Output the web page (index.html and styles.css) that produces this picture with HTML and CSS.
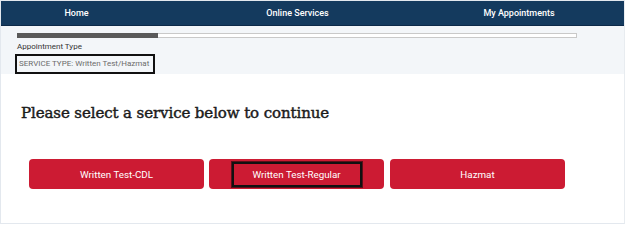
FILE: index.html
```html
<!DOCTYPE html>
<html>
<head>
<meta charset="utf-8">
<link rel="stylesheet" href="styles.css">
</head>
<body>
<div class="page">
  <nav class="nav">
    <a class="nav-item">Home</a>
    <a class="nav-item">Online Services</a>
    <a class="nav-item">My Appointments</a>
  </nav>
  <div class="sub">
    <div class="progress"><div class="progress-fill"></div></div>
    <div class="label">Appointment Type</div>
    <div class="service-type">SERVICE TYPE: Written Test/Hazmat</div>
  </div>
  <main class="main">
    <h1 class="title">Please select a service below to continue</h1>
    <div class="buttons">
      <button class="btn">Written Test-CDL</button>
      <button class="btn"><span class="focus">Written Test-Regular</span></button>
      <button class="btn">Hazmat</button>
    </div>
  </main>
</div>
</body>
</html>
```
FILE: styles.css
```css
* { box-sizing: border-box; }
html, body { margin: 0; padding: 0; background: #fff; }
body { font-family: Roboto, "Liberation Sans", Arial, sans-serif; }
.page {
  width: 625px;
  height: 224px;
  border: 1px solid #e3e8ee;
  border-right-color: #e8ecf0;
  display: flex;
  flex-direction: column;
}
.nav {
  height: 25px;
  background: #143a5e;
  border-bottom: 1px solid #0c2948;
  display: grid;
  grid-template-columns: 151px 291px 152px 1fr;
  align-items: center;
}
.nav-item {
  color: #fff;
  font-size: 9px;
  font-weight: 500;
  text-align: center;
}
.sub {
  background: #f3f6f9;
  height: 48px;
  padding: 7px 0 0 16px;
}
.progress {
  width: 560px;
  height: 5px;
  background: #fff;
  border: 1px solid #c9c9c9;
  position: relative;
}
.progress-fill {
  position: absolute;
  left: -1px;
  top: -1px;
  width: 141px;
  height: 5px;
  background: #5a5a5a;
}
.label {
  font-size: 8px;
  color: #333;
  margin-top: 3px;
  line-height: 11px;
}
.service-type {
  margin-top: 2px;
  margin-left: -2px;
  border: 2px solid #111;
  font-size: 8px;
  color: #6b6b6b;
  padding: 2px 2px 2px 2px;
  width: 140px;
  white-space: nowrap;
  line-height: 12px;
}
.main {
  flex: 1;
  padding: 0 0 0 20px;
}
.title {
  font-family: "DejaVu Serif", "Liberation Serif", serif;
  font-weight: normal;
  -webkit-text-stroke: 0.45px #1b1b1b;
  letter-spacing: -0.1px;
  font-size: 15px;
  color: #1b1b1b;
  margin: 29px 0 0 0;
  line-height: 20px;
}
.buttons {
  display: flex;
  gap: 5px;
  margin-top: 36px;
  margin-left: 8px;
}
.btn {
  width: 175px;
  height: 30px;
  background: #cc1b33;
  color: #fff;
  border: none;
  border-radius: 4px;
  font-family: Roboto, "Liberation Sans", Arial, sans-serif;
  font-size: 9.8px;
  padding: 0;
  display: flex;
  align-items: center;
  justify-content: center;
}
.btn:nth-child(3) { margin-left: 1px; }
.focus {
  display: flex;
  align-items: center;
  justify-content: center;
  width: 130px;
  height: 25px;
  border: 2px solid #111;
  outline: 1px solid #5a1019;
}
```
